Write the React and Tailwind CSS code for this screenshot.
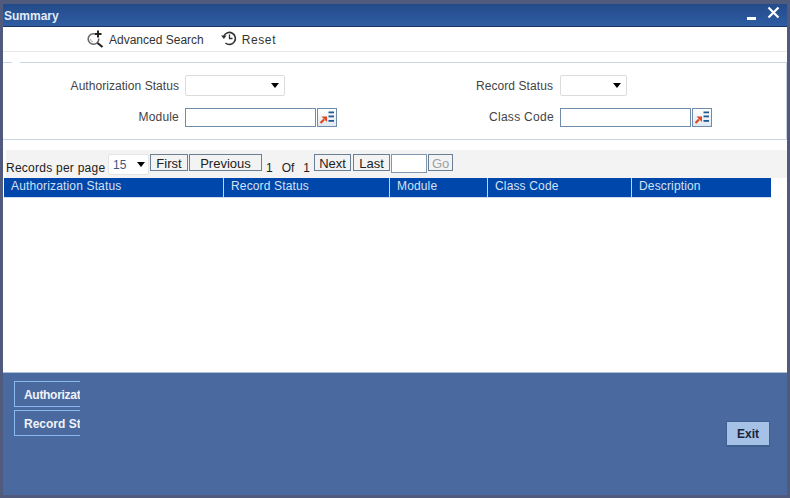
import React from "react";

const font = { fontFamily: '"Liberation Sans", Arial, sans-serif' };

function LovIcon() {
  return (
    <button className="w-[20px] h-[19px] border border-[#6f8cab] bg-[linear-gradient(#ffffff,#dfe8f2)] flex items-center justify-center p-0">
      <svg width="17" height="14" viewBox="0 0 17 14">
        <path d="M1.5 13 L5 9.5" stroke="#e0451c" strokeWidth="2.2" fill="none" />
        <path d="M2.5 6.5 H8 V12 Z" fill="#e0451c" />
        <rect x="9.5" y="1.5" width="5.5" height="1.8" fill="#1f5a92" />
        <rect x="9.5" y="5.5" width="5.5" height="1.8" fill="#1f5a92" />
        <rect x="9.5" y="10" width="5.5" height="1.8" fill="#1f5a92" />
      </svg>
    </button>
  );
}

function Caret() {
  return <span className="w-0 h-0 border-l-[4px] border-r-[4px] border-t-[5px] border-l-transparent border-r-transparent border-t-black" />;
}

function Select({ w }) {
  return (
    <div className={`${w} h-[21px] border border-[#dcdcdc] rounded-[2px] bg-white flex items-center justify-end pr-[5px]`}>
      <Caret />
    </div>
  );
}

function PageBtn({ w, children, disabled }) {
  return (
    <button className={`${w} h-[17px] border border-[#6b7f94] bg-[#f3f3f3] text-[13px] leading-[15px] pt-[1px] px-0 pb-0 text-center ${disabled ? "text-[#a0a0a0]" : "text-[#222]"}`}>
      {children}
    </button>
  );
}

function Th({ w, children, last }) {
  return (
    <div className={`${w} h-full pl-[7px] pt-[1px] text-[12px] leading-[15px] tracking-[0.15px] text-[#d6e2f4] ${last ? "" : "border-r border-[#c4d4ec]"}`}>
      {children}
    </div>
  );
}

function TabBtn({ children, tight }) {
  return (
    <div className={`h-[26px] w-[66px] border-l border-t border-b border-[#8ab8f0] overflow-hidden pl-[9px] text-[12px] leading-[26px] font-bold text-[#f0f4fa] whitespace-nowrap ${tight ? "tracking-[-0.3px]" : ""}`}>
      {children}
    </div>
  );
}

export default function App() {
  return (
    <div style={font} className="w-[790px] h-[498px] bg-[#4f5a7c] pt-[4px] pl-[3px] pr-[3px] pb-[3px] flex flex-col overflow-hidden">
      <div className="h-[23px] shrink-0 bg-[linear-gradient(#234b8a,#2f5da3)] border-b border-[#1b3560] flex items-start justify-between text-white">
        <span className="pl-[1px] pt-[5px] text-[12px] leading-[15px] font-bold text-[#e4ecf7]">Summary</span>
        <div className="flex items-start gap-[11px] pr-[7px] pt-[1px]">
          <span className="mt-[12px] w-[9px] h-[3px] bg-white" />
          <svg width="13" height="13" viewBox="0 0 13 13" className="mt-[1px]">
            <path d="M1.5 1.5 L11.5 11.5 M11.5 1.5 L1.5 11.5" stroke="#fff" strokeWidth="2.2" fill="none" />
          </svg>
        </div>
      </div>

      <div className="h-[345px] shrink-0 bg-white flex flex-col">
        <div className="h-[25px] shrink-0 border-b border-[#e9e9e9] flex items-center pl-[84px] text-[12px] text-[#333]">
          <svg width="18" height="19" viewBox="0 0 18 19" className="mr-[4px] mb-[2px]">
            <circle cx="6.5" cy="10" r="5.3" fill="none" stroke="#666" strokeWidth="1.6" />
            <path d="M6 13 A3 3 0 0 1 3.5 10" fill="none" stroke="#aaa" strokeWidth="1" />
            <path d="M10.5 14 L15.5 18" stroke="#222" strokeWidth="2.2" fill="none" />
            <rect x="7" y="0.5" width="8" height="9" fill="#fff" />
            <path d="M7.5 5 H14.5 M11 1.5 V8.5" stroke="#222" strokeWidth="2" fill="none" />
          </svg>
          <span className="mt-[2px]">Advanced Search</span>
          <svg width="17" height="16" viewBox="0 0 16 16" className="ml-[16px] mr-[5px] mb-[2px]">
            <path d="M3.4 6 A6 6 0 1 1 5 13" fill="none" stroke="#333" strokeWidth="1.6" />
            <path d="M0.5 5.5 L6 5.5 L3.4 9 Z" fill="#333" />
            <path d="M9 4.5 V8.5 H12" fill="none" stroke="#333" strokeWidth="1.3" />
          </svg>
          <span className="mt-[2px] tracking-[0.6px]">Reset</span>
        </div>

        <div className="h-[10px] shrink-0" />

        <div className="relative h-[78px] shrink-0 border-t border-b border-r border-[#c9d6e2] pt-[12px] text-[12px] text-[#444]">
          <span className="absolute -top-[1px] left-[9px] w-[8px] h-[1px] bg-white" />
          <div className="flex items-center h-[21px]">
            <span className="w-[176px] text-right tracking-[0.05px]">Authorization Status</span>
            <div className="ml-[6px]"><Select w="w-[100px]" /></div>
            <span className="w-[268px] text-right tracking-[0.08px]">Record Status</span>
            <div className="ml-[7px]"><Select w="w-[67px]" /></div>
          </div>
          <div className="flex items-center h-[20px] mt-[11px]">
            <span className="w-[176px] text-right tracking-[0.2px]">Module</span>
            <input readOnly className="ml-[6px] w-[131px] h-[19px] border border-[#6f8cab] bg-white" />
            <div className="ml-[1px]"><LovIcon /></div>
            <span className="w-[217px] text-right tracking-[0.3px]">Class Code</span>
            <input readOnly className="ml-[6px] w-[131px] h-[19px] border border-[#6f8cab] bg-white" />
            <div className="ml-[1px]"><LovIcon /></div>
          </div>
        </div>

        <div className="h-[10px] shrink-0" />

        <div className="h-[28px] shrink-0 ml-[3px] bg-[#f3f3f3] flex items-start pt-[4px] text-[12px] text-[#222] whitespace-nowrap">
          <span className="mt-[5px] w-[102px] tracking-[0.25px]">Records per page</span>
          <div className="w-[41px] h-[21px] bg-white border border-[#e4e4e4] rounded-[2px] flex items-center justify-between pl-[4px] pr-[3px] text-[#3a5a80]">
            <span>15</span><Caret />
          </div>
          <div className="ml-[1px]"><PageBtn w="w-[38px]">First</PageBtn></div>
          <div className="ml-[1px]"><PageBtn w="w-[73px]">Previous</PageBtn></div>
          <span className="mt-[5px] ml-[4px]">1</span>
          <span className="mt-[5px] ml-[9px]">Of</span>
          <span className="mt-[5px] ml-[9px]">1</span>
          <div className="ml-[4px]"><PageBtn w="w-[37px]">Next</PageBtn></div>
          <div className="ml-[2px]"><PageBtn w="w-[37px]">Last</PageBtn></div>
          <div className="ml-[1px] w-[36px] h-[19px] border border-[#7f97b0] bg-white" />
          <div className="ml-[1px]"><PageBtn w="w-[25px]" disabled>Go</PageBtn></div>
        </div>

        <div className="h-[20px] shrink-0 ml-[1px] w-[767px] bg-[#0047ab] border-b border-[#cfdcee] flex">
          <Th w="w-[220px]">Authorization Status</Th>
          <Th w="w-[166px]">Record Status</Th>
          <Th w="w-[98px]">Module</Th>
          <Th w="w-[144px]">Class Code</Th>
          <Th w="w-[139px]" last>Description</Th>
        </div>

        <div className="flex-1" />
      </div>

      <div className="flex-1 bg-[#4a699f] border-t border-[#a9bfdc] flex justify-between">
        <div className="pl-[11px] pt-[8px] flex flex-col gap-[3px]">
          <TabBtn tight>Authorization Status</TabBtn>
          <TabBtn>Record Status</TabBtn>
        </div>
        <button className="mt-[48px] mr-[17px] w-[44px] h-[26px] bg-[#a5c1e6] border border-[#3f5f8f] border-b-2 text-[12px] font-bold text-[#1a2438] p-0">
          Exit
        </button>
      </div>
    </div>
  );
}
